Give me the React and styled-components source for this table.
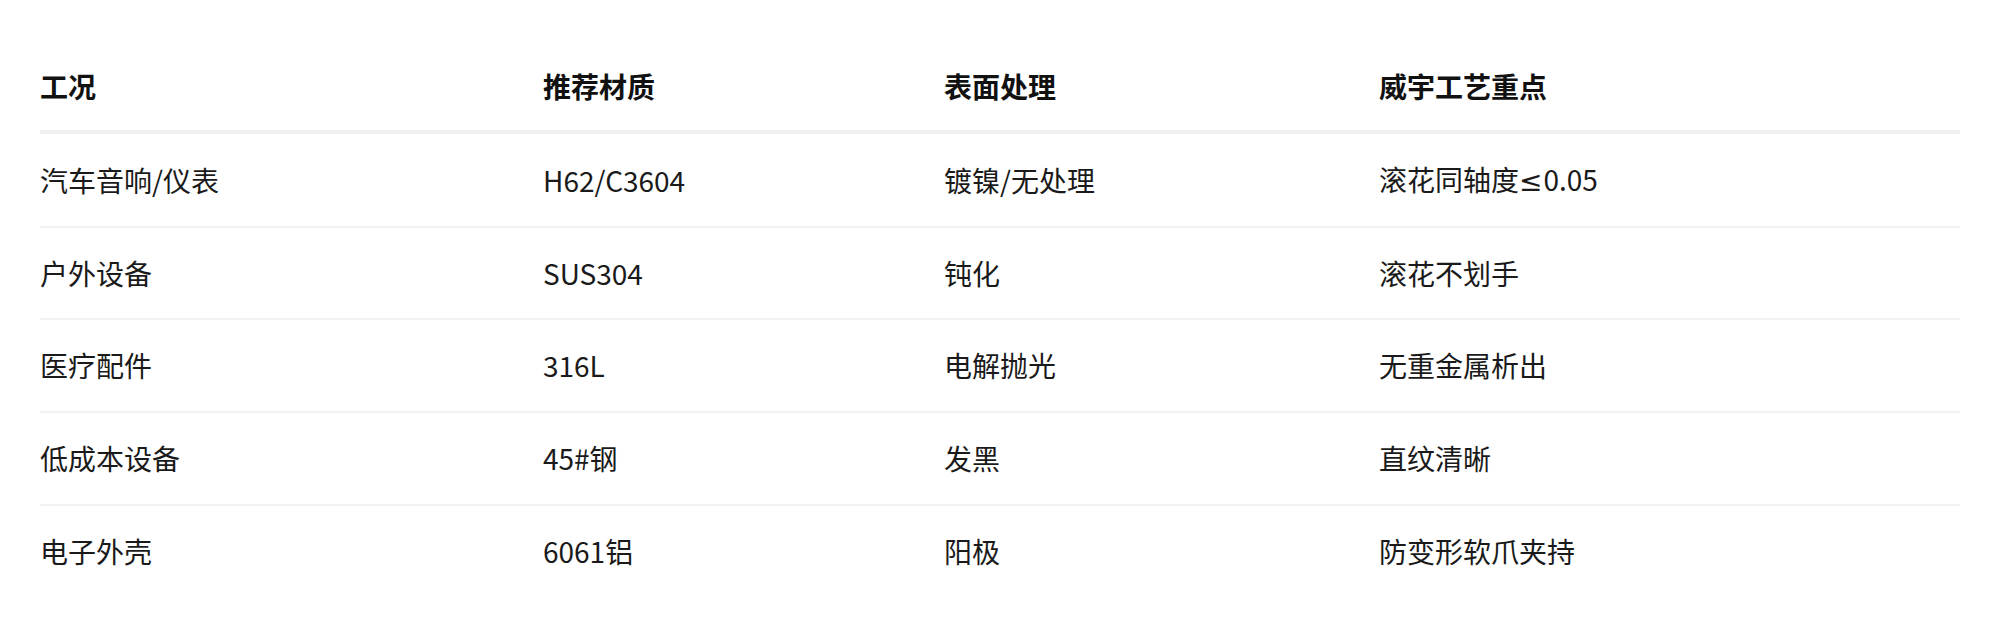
import React from 'react';
import styled, { createGlobalStyle } from 'styled-components';

const GlobalStyle = createGlobalStyle`
    html, body {
        margin: 0;
        padding: 0;
        background: #ffffff;
    }
    body {
        font-family: "Noto Sans CJK SC", "Noto Sans", sans-serif;
        color: #1a1a1a;
    }
`;

const Page = styled.div`
    padding: 40px 40px;
`;

const Table = styled.table`
    width: 1920px;
    border-collapse: collapse;
    table-layout: fixed;
    font-size: 28px;
    line-height: 42.67px;
`;

const HeadCell = styled.th`
    text-align: left;
    font-weight: 700;
    color: #111111;
    padding: 25px 0 22.33px;
    border-bottom: 4px solid #f0f0f0;
    vertical-align: middle;
`;

const Row = styled.tr`
    border-bottom: ${props => props.last ? 'none' : '2px solid #f2f2f2'};
`;

const Cell = styled.td`
    padding: 24px 0;
    color: #1a1a1a;
    vertical-align: middle;
    white-space: nowrap;
`;

// the CJK font draws ≤ full width; the reference uses a narrow one
const MathSign = styled.span`
    font-family: "Noto Sans", "DejaVu Sans", sans-serif;
    margin-right: 1px;
`;

const columns = [
    { label: '工况', width: 503 },
    { label: '推荐材质', width: 401 },
    { label: '表面处理', width: 435 },
    { label: '威宇工艺重点', width: 581 },
];

const rows = [
    ['汽车音响/仪表', 'H62/C3604', '镀镍/无处理', '滚花同轴度≤0.05'],
    ['户外设备', 'SUS304', '钝化', '滚花不划手'],
    ['医疗配件', '316L', '电解抛光', '无重金属析出'],
    ['低成本设备', '45#钢', '发黑', '直纹清晰'],
    ['电子外壳', '6061铝', '阳极', '防变形软爪夹持'],
];

const renderValue = (value) => {
    const parts = value.split('≤');
    if (parts.length === 1) return value;
    return (
        <>
            {parts[0]}
            <MathSign>≤</MathSign>
            {parts[1]}
        </>
    );
};

const App = () => {
    return (
        <>
            <GlobalStyle />
            <Page>
                <Table>
                    <colgroup>
                        {columns.map(col => (
                            <col key={col.label} style={{ width: col.width }} />
                        ))}
                    </colgroup>
                    <thead>
                        <tr>
                            {columns.map(col => (
                                <HeadCell key={col.label}>{col.label}</HeadCell>
                            ))}
                        </tr>
                    </thead>
                    <tbody>
                        {rows.map((row, i) => (
                            <Row key={row[0]} last={i === rows.length - 1}>
                                {row.map((value, j) => (
                                    <Cell key={j}>{renderValue(value)}</Cell>
                                ))}
                            </Row>
                        ))}
                    </tbody>
                </Table>
            </Page>
        </>
    );
};

export default App;
